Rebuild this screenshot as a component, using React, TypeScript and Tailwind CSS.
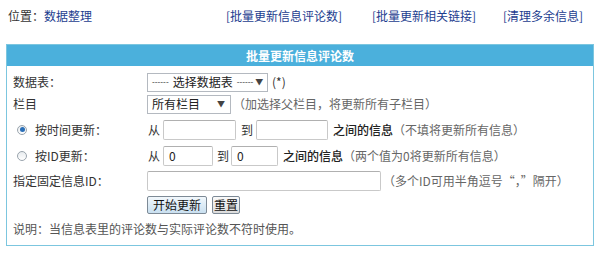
import React from "react";

const font = { fontFamily: '"Noto Sans CJK SC", "Noto Sans", sans-serif' };

const Select: React.FC<{ children: React.ReactNode; width: string }> = ({ children, width }) => (
  <div
    className={`flex h-[19px] items-center justify-between overflow-hidden whitespace-nowrap border border-[#b4b9c0] bg-white pl-[4px] pr-[5px] text-[12px] text-[#222] ${width}`}
  >
    <span className="flex items-center">{children}</span>
    <span className="ml-[2px] text-[8px] text-[#444]">▼</span>
  </div>
);

const Input: React.FC<{ value?: string; width: string }> = ({ value, width }) => (
  <div
    className={`flex h-[20px] items-center rounded-[2px] border border-[#c9c9c9] border-t-[#b0b0b0] bg-white px-[5px] text-[12px] text-[#222] ${width}`}
  >
    {value}
  </div>
);

const Radio: React.FC<{ checked?: boolean }> = ({ checked }) => (
  <span className="flex h-[10px] w-[10px] items-center justify-center rounded-full border border-[#9aa4ad] bg-gradient-to-b from-[#e8ecef] to-[#ffffff]">
    {checked && <span className="h-[5px] w-[5px] rounded-full bg-[#2a6fb8]" />}
  </span>
);

const Hint: React.FC<{ children: React.ReactNode }> = ({ children }) => (
  <span className="whitespace-nowrap text-[#666]">{children}</span>
);

export default function App() {
  return (
    <div className="h-[255px] w-[600px] bg-white text-[12px] leading-none text-[#333]" style={font}>
      <div className="flex h-[44px] items-start whitespace-nowrap pt-[10px] pl-[8px]">
        <span className="w-[218px]">
          位置：<span className="text-[#1d3d8f]">数据整理</span>
        </span>
        <span className="w-[146px] text-[#1d3d8f]">[批量更新信息评论数]</span>
        <span className="w-[131px] text-[#1d3d8f]">[批量更新相关链接]</span>
        <span className="text-[#1d3d8f]">[清理多余信息]</span>
      </div>

      <div className="ml-[6px] w-[588px] border border-[#7cc6df]">
        <div className="flex h-[21px] items-center justify-center bg-[#4bb0dc] font-bold text-white">
          批量更新信息评论数
        </div>
        <div className="whitespace-nowrap pt-[5px] pb-[3px]">
          <div className="flex h-[22px] items-center">
            <span className="w-[140px] pl-[6px]">数据表：</span>
            <Select width="w-[121px]">
              <span className="text-[8px]">------</span>
              <span className="mx-[4px]">选择数据表</span>
              <span className="text-[8px]">------</span>
            </Select>
            <span className="ml-[4px]">(*)</span>
          </div>
          <div className="flex h-[22px] items-center">
            <span className="w-[140px] pl-[6px]">栏目</span>
            <Select width="w-[84px]">所有栏目</Select>
            <span className="ml-[2px]">
              <Hint>（加选择父栏目，将更新所有子栏目）</Hint>
            </span>
          </div>
          <div className="flex h-[29px] items-center">
            <span className="flex w-[141px] items-center pl-[10px]">
              <Radio checked />
              <span className="ml-[8px]">按时间更新：</span>
            </span>
            <span className="w-[15px]">从</span>
            <Input width="w-[73px]" />
            <span className="ml-[5px] w-[15px]">到</span>
            <Input width="w-[72px]" />
            <span className="ml-[5px] font-medium text-[#222]">之间的信息</span>
            <Hint>（不填将更新所有信息）</Hint>
          </div>
          <div className="flex h-[24px] items-center">
            <span className="flex w-[141px] items-center pl-[10px]">
              <Radio />
              <span className="ml-[8px]">按ID更新：</span>
            </span>
            <span className="w-[15px]">从</span>
            <Input value="0" width="w-[50px]" />
            <span className="ml-[4px] w-[14px]">到</span>
            <Input value="0" width="w-[47px]" />
            <span className="ml-[5px] font-medium text-[#222]">之间的信息</span>
            <Hint>（两个值为0将更新所有信息）</Hint>
          </div>
          <div className="flex h-[26px] items-center">
            <span className="w-[140px] pl-[6px]">指定固定信息ID：</span>
            <Input width="w-[234px]" />
            <span className="ml-[2px]">
              <Hint>（多个ID可用半角逗号“，”隔开）</Hint>
            </span>
          </div>
          <div className="flex h-[22px] items-center pl-[140px]">
            <span className="flex h-[18px] w-[60px] items-center justify-center rounded-[2px] border border-[#7d8a96] bg-gradient-to-b from-[#f2f8fc] to-[#c9e0f0] text-[#111]">
              开始更新
            </span>
            <span className="ml-[5px] flex h-[18px] w-[28px] items-center justify-center rounded-[2px] border border-[#7d8a96] bg-gradient-to-b from-[#fafafa] to-[#dcdcdc] text-[#111]">
              重置
            </span>
          </div>
          <div className="flex h-[26px] items-center pl-[6px] text-[#555]">
            说明：当信息表里的评论数与实际评论数不符时使用。
          </div>
        </div>
      </div>
    </div>
  );
}
